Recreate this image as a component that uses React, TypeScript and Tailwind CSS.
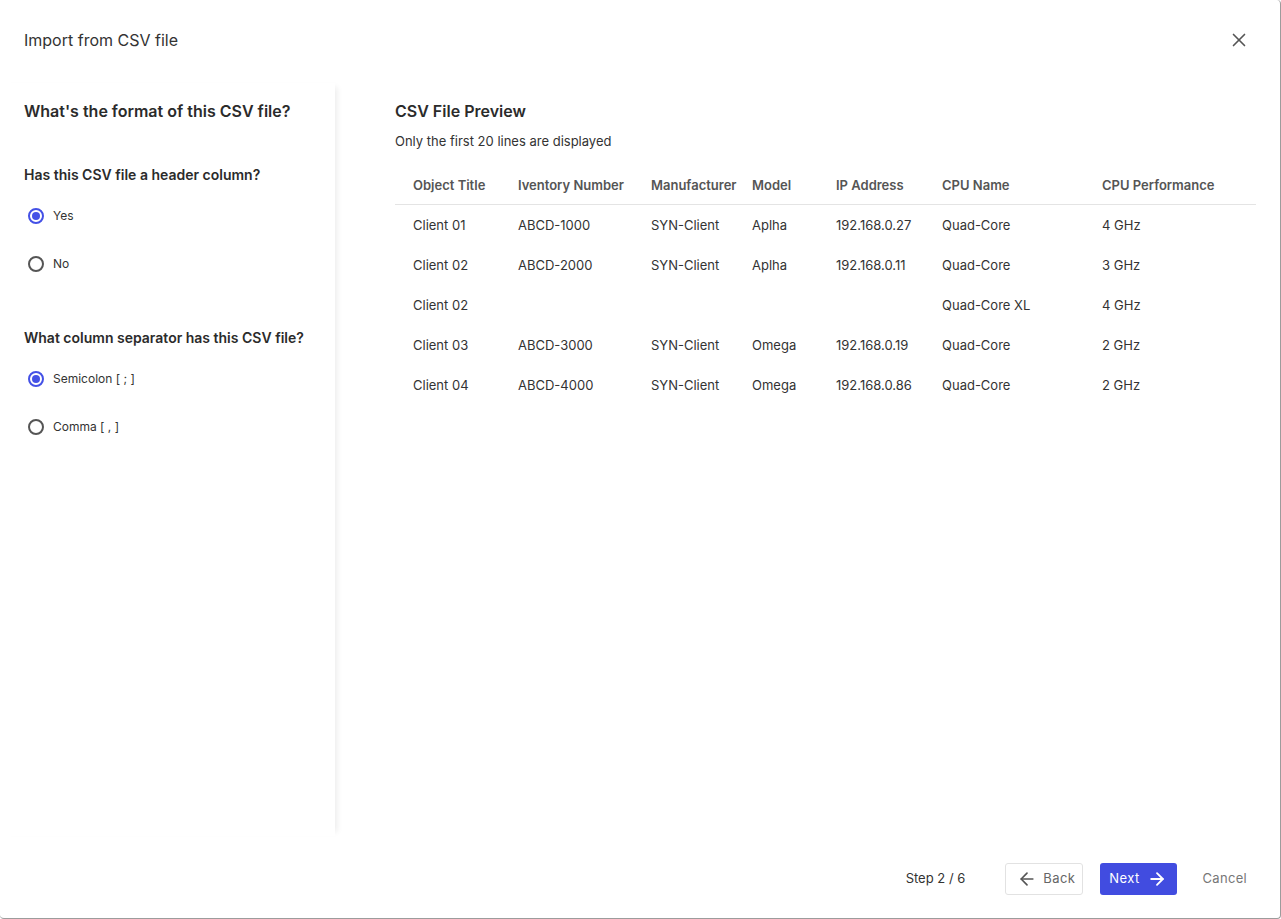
import { ArrowLeft, ArrowRight, X } from 'lucide-react';

const columns = [
  { key: 'title', label: 'Object Title' },
  { key: 'inv', label: 'Iventory Number' },
  { key: 'man', label: 'Manufacturer' },
  { key: 'model', label: 'Model' },
  { key: 'ip', label: 'IP Address' },
  { key: 'cpu', label: 'CPU Name' },
  { key: 'perf', label: 'CPU Performance' },
];

const rows: Record<string, string>[] = [
  { title: 'Client 01', inv: 'ABCD-1000', man: 'SYN-Client', model: 'Aplha', ip: '192.168.0.27', cpu: 'Quad-Core', perf: '4 GHz' },
  { title: 'Client 02', inv: 'ABCD-2000', man: 'SYN-Client', model: 'Aplha', ip: '192.168.0.11', cpu: 'Quad-Core', perf: '3 GHz' },
  { title: 'Client 02', inv: '', man: '', model: '', ip: '', cpu: 'Quad-Core XL', perf: '4 GHz' },
  { title: 'Client 03', inv: 'ABCD-3000', man: 'SYN-Client', model: 'Omega', ip: '192.168.0.19', cpu: 'Quad-Core', perf: '2 GHz' },
  { title: 'Client 04', inv: 'ABCD-4000', man: 'SYN-Client', model: 'Omega', ip: '192.168.0.86', cpu: 'Quad-Core', perf: '2 GHz' },
];

const gridCols = 'grid grid-cols-[105px_133px_101px_84px_106px_160px_1fr]';

function Radio({ label, checked }: { label: string; checked?: boolean }) {
  return (
    <label className="flex h-12 cursor-pointer items-center gap-[9px] pl-1">
      <span
        className={
          checked
            ? 'flex h-4 w-4 items-center justify-center rounded-full border-2 border-[#4451e6]'
            : 'flex h-4 w-4 items-center justify-center rounded-full border-2 border-[#555]'
        }
      >
        {checked && <span className="h-2 w-2 rounded-full bg-[#4451e6]" />}
      </span>
      <span className="text-[12px] text-[#333]">{label}</span>
    </label>
  );
}

export default function App() {
  return (
    <div className="flex h-[919px] w-[1281px] flex-col overflow-hidden rounded-[4px] border-r border-b border-[#9c9c9c] bg-white font-['Inter',sans-serif] text-[#2b2b2b]">
      <div className="flex h-[83px] shrink-0 items-center justify-between pr-[30px] pb-[3px] pl-6">
        <h1 className="text-[16px] font-normal text-[#333]">Import from CSV file</h1>
        <button type="button" className="text-[#555]">
          <X className="h-[22px] w-[22px]" strokeWidth={1.8} />
        </button>
      </div>

      <div className="flex min-h-0 flex-1">
        <aside className="relative z-10 w-[335px] shrink-0 pt-[17px] pl-6 shadow-[6px_0_6px_-4px_rgba(0,0,0,0.08)]">
          <h2 className="text-[16px] leading-[22px] font-semibold">What's the format of this CSV file?</h2>

          <h3 className="mt-[43px] text-[14px] leading-[20px] font-semibold">Has this CSV file a header column?</h3>
          <div className="mt-[7px]">
            <Radio label="Yes" checked />
            <Radio label="No" />
          </div>

          <h3 className="mt-[40px] text-[14px] leading-[20px] font-semibold">What column separator has this CSV file?</h3>
          <div className="mt-[7px]">
            <Radio label="Semicolon [ ; ]" checked />
            <Radio label="Comma [ , ]" />
          </div>
        </aside>

        <section className="flex-1 pt-[17px] pr-[24px] pl-[60px]">
          <h2 className="text-[16px] leading-[22px] font-semibold">CSV File Preview</h2>
          <p className="mt-[11px] text-[13px] leading-[16px] text-[#333]">Only the first 20 lines are displayed</p>

          <div className="mt-[18px] text-[13px]">
            <div className={`${gridCols} h-[38px] items-center border-b border-[#e4e4e4]`}>
              {columns.map((c) => (
                <div key={c.key} className="pl-[18px] font-semibold text-[#555]">
                  {c.label}
                </div>
              ))}
            </div>
            {rows.map((r, i) => (
              <div key={i} className={`${gridCols} h-10 items-center pt-[2px]`}>
                {columns.map((c) => (
                  <div key={c.key} className="pl-[18px] text-[#333]">
                    {r[c.key]}
                  </div>
                ))}
              </div>
            ))}
          </div>
        </section>
      </div>

      <div className="flex h-[82px] shrink-0 items-center justify-end pt-[3px] pr-[33px]">
        <span className="mr-[40px] text-[13px] text-[#333]">Step 2 / 6</span>
        <button
          type="button"
          className="flex h-8 items-center gap-[6px] rounded-[3px] border border-[#e2e2e2] bg-white pr-[7px] pl-[11px] text-[13px] tracking-[0.4px] text-[#666]"
        >
          <ArrowLeft className="h-5 w-5 text-[#555]" strokeWidth={2} />
          Back
        </button>
        <button
          type="button"
          className="ml-[17px] flex h-8 items-center gap-[7px] rounded-[3px] bg-[#414ce0] pr-[10px] pl-[9px] text-[13px] tracking-[0.4px] text-white"
        >
          Next
          <ArrowRight className="h-5 w-5" strokeWidth={2.2} />
        </button>
        <button type="button" className="ml-[26px] text-[13px] tracking-[0.3px] text-[#777]">
          Cancel
        </button>
      </div>
    </div>
  );
}
